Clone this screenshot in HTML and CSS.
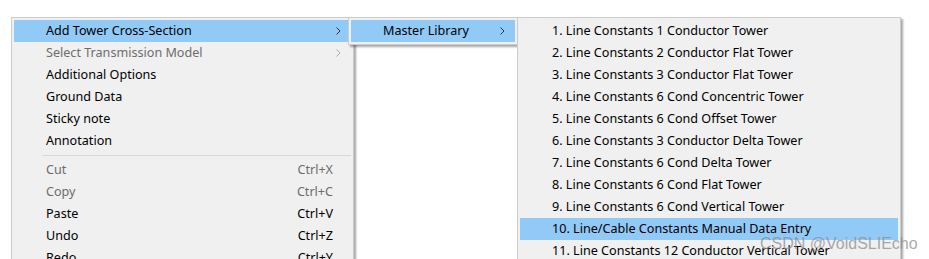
FILE: index.html
```html
<!DOCTYPE html>
<html>
<head>
<meta charset="utf-8">
<link rel="stylesheet" href="styles.css">
</head>
<body>
<div class="stage">
  <div class="menu menu-main">
    <div class="item active"><span class="label">Add Tower Cross-Section</span><svg class="arrow" width="5" height="8" viewBox="0 0 5 8"><polyline points="0.5,0.5 4,4 0.5,7.5" fill="none" stroke="#333" stroke-width="1"/></svg></div>
    <div class="item disabled"><span class="label">Select Transmission Model</span><svg class="arrow" width="5" height="8" viewBox="0 0 5 8"><polyline points="0.5,0.5 4,4 0.5,7.5" fill="none" stroke="#aaa" stroke-width="1"/></svg></div>
    <div class="item"><span class="label">Additional Options</span></div>
    <div class="item"><span class="label">Ground Data</span></div>
    <div class="item"><span class="label">Sticky note</span></div>
    <div class="item"><span class="label">Annotation</span></div>
    <div class="sep"></div>
    <div class="item disabled"><span class="label">Cut</span><span class="key">Ctrl+X</span></div>
    <div class="item disabled"><span class="label">Copy</span><span class="key">Ctrl+C</span></div>
    <div class="item"><span class="label">Paste</span><span class="key">Ctrl+V</span></div>
    <div class="item"><span class="label">Undo</span><span class="key">Ctrl+Z</span></div>
    <div class="item"><span class="label">Redo</span><span class="key">Ctrl+Y</span></div>
  </div>

  <div class="menu menu-lib">
    <div class="item active"><span class="label">Master Library</span><svg class="arrow" width="5" height="8" viewBox="0 0 5 8"><polyline points="0.5,0.5 4,4 0.5,7.5" fill="none" stroke="#333" stroke-width="1"/></svg></div>
  </div>

  <div class="menu menu-towers">
    <div class="item"><span class="label">1. Line Constants 1 Conductor Tower</span></div>
    <div class="item"><span class="label">2. Line Constants 2 Conductor Flat Tower</span></div>
    <div class="item"><span class="label">3. Line Constants 3 Conductor Flat Tower</span></div>
    <div class="item"><span class="label">4. Line Constants 6 Cond Concentric Tower</span></div>
    <div class="item"><span class="label">5. Line Constants 6 Cond Offset Tower</span></div>
    <div class="item"><span class="label">6. Line Constants 3 Conductor Delta Tower</span></div>
    <div class="item"><span class="label">7. Line Constants 6 Cond Delta Tower</span></div>
    <div class="item"><span class="label">8. Line Constants 6 Cond Flat Tower</span></div>
    <div class="item"><span class="label">9. Line Constants 6 Cond Vertical Tower</span></div>
    <div class="item active"><span class="label">10. Line/Cable Constants Manual Data Entry</span></div>
    <div class="item"><span class="label">11. Line Constants 12 Conductor Vertical Tower</span></div>
  </div>

  <div class="watermark">CSDN @VoidSLIEcho</div>
</div>
</body>
</html>
```

FILE: styles.css
```css
html, body {
  margin: 0;
  padding: 0;
  background: #ffffff;
}

.stage {
  position: relative;
  width: 929px;
  height: 259px;
  overflow: hidden;
  font-family: "Noto Sans", "Open Sans", sans-serif;
  font-size: 12.6px;
  color: #000;
}

.menu {
  position: absolute;
  top: 17px;
  background: #f0f0f0;
  border: 1px solid #cccccc;
  padding: 2px;
  box-sizing: border-box;
  box-shadow: 2px 2px 2px rgba(0, 0, 0, 0.35);
}

.menu-main {
  left: 11px;
  width: 343px;
  height: 280px;
}

.menu-lib {
  left: 348px;
  width: 170px;
  height: 28px;
}

.menu-towers {
  left: 517px;
  width: 384px;
  height: 280px;
}

.item {
  display: flex;
  align-items: center;
  box-sizing: border-box;
  height: 22px;
  padding-left: 32px;
  padding-right: 10px;
  padding-bottom: 2px;
  white-space: nowrap;
}

.item .label {
  flex: 1;
}

.item .arrow {
  margin-top: 1px;
}

.item.active {
  background: #91c9f7;
}

.item.disabled {
  color: #6d6d6d;
}

.key {
  padding-right: 8px;
}

.arrow {
  display: block;
}

.sep {
  height: 7px;
  margin-left: 28px;
  display: flex;
  align-items: center;
}

.sep::before {
  content: "";
  display: block;
  flex: 1;
  height: 1px;
  background: #d7d7d7;
}

.watermark {
  position: absolute;
  left: 760px;
  top: 235px;
  font-family: "Liberation Sans", Arial, sans-serif;
  font-size: 16px;
  color: rgba(140, 140, 140, 0.75);
  white-space: nowrap;
}
```
